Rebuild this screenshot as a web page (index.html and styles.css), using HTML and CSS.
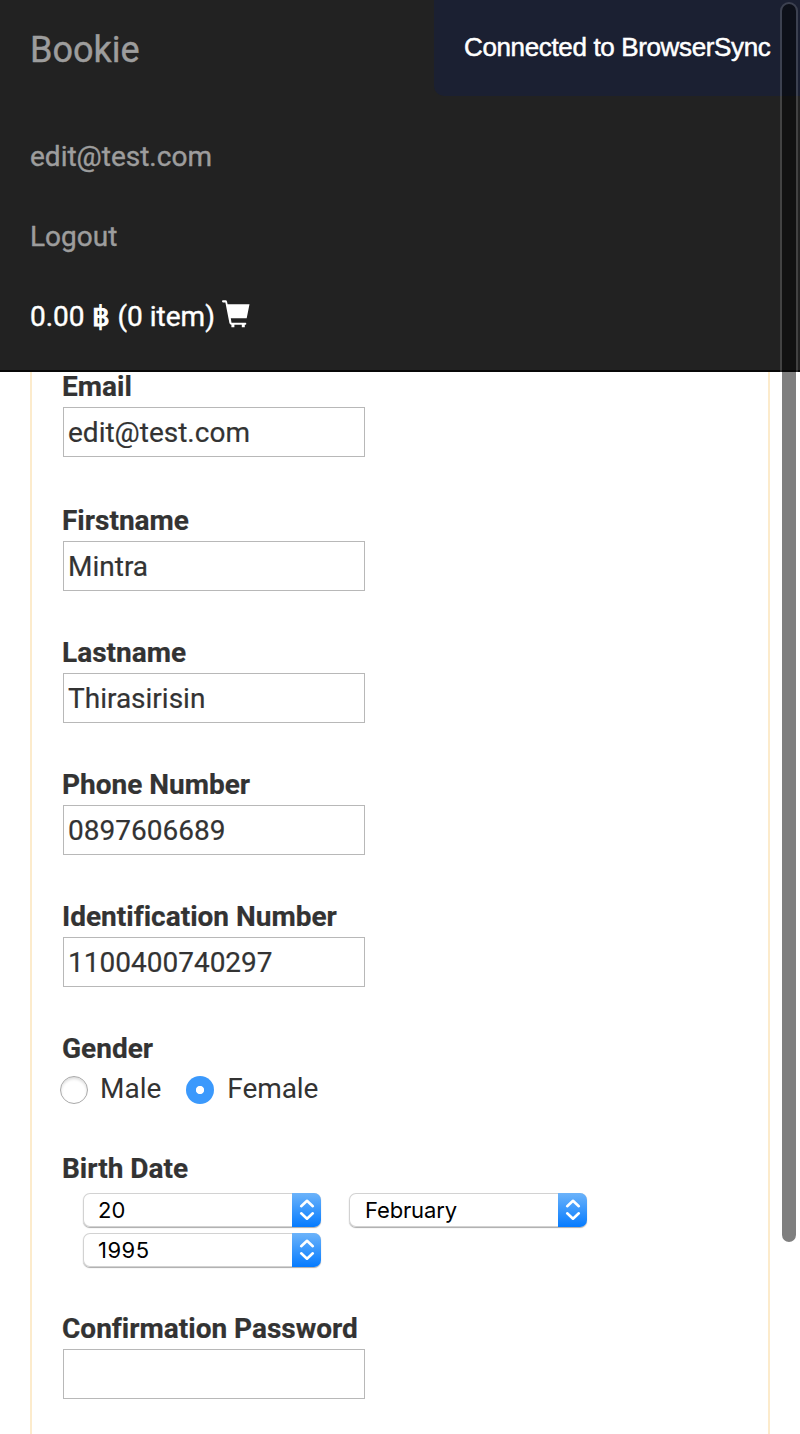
FILE: index.html
```html
<!DOCTYPE html>
<html lang="en">
<head>
<meta charset="utf-8">
<title>Bookie</title>
<link rel="stylesheet" href="styles.css">
</head>
<body>
<nav class="navbar">
  <a class="brand">Bookie</a>
  <ul class="nav">
    <li><a>edit@test.com</a></li>
    <li><a>Logout</a></li>
    <li class="cart"><span>0.00 <span class="baht">฿</span> (0 item)</span>
      <svg class="cart-icon" width="28" height="28" viewBox="0 0 28 28"><path d="M1 .2H3.6Q4.7 .2 5 1.5L5.6 4.3H27.5L24.7 18.2H8.8L9.5 22.7H23.5Q24.3 22.9 24.3 23.7T23.5 24.7H22.8V27.2H19.8V24.7H12.4V27.2H9.4V24.7H9Q7.7 24.5 7.4 23.1L3.4 2.5H1Q0 2.3 0 1.3T1 .2Z"/></svg>
    </li>
  </ul>
</nav>
<main class="panel">
  <form class="form">
    <div class="field first"><label for="email">Email</label><input id="email" value="edit@test.com"></div>
    <div class="field"><label for="firstname">Firstname</label><input id="firstname" value="Mintra"></div>
    <div class="field"><label for="lastname">Lastname</label><input id="lastname" value="Thirasirisin"></div>
    <div class="field"><label for="phone">Phone Number</label><input id="phone" value="0897606689"></div>
    <div class="field"><label for="ident">Identification Number</label><input id="ident" value="1100400740297"></div>
    <div class="field gender">
      <label>Gender</label>
      <div class="radios">
        <span class="radio"></span><span class="male">Male</span>
        <span class="radio checked"></span><span class="female">Female</span>
      </div>
    </div>
    <div class="field birth">
      <label>Birth Date</label>
      <div class="dates">
        <div class="select"><span>20</span><i class="arrows"><svg width="16" height="22" viewBox="0 0 16 22"><path d="M2.2 7.2 8 1.8l5.8 5.4M2.2 14.3 8 19.7l5.8-5.4"/></svg></i></div>
        <div class="select month"><span>February</span><i class="arrows"><svg width="16" height="22" viewBox="0 0 16 22"><path d="M2.2 7.2 8 1.8l5.8 5.4M2.2 14.3 8 19.7l5.8-5.4"/></svg></i></div>
        <div class="select year"><span>1995</span><i class="arrows"><svg width="16" height="22" viewBox="0 0 16 22"><path d="M2.2 7.2 8 1.8l5.8 5.4M2.2 14.3 8 19.7l5.8-5.4"/></svg></i></div>
      </div>
    </div>
    <div class="field"><label for="confirm">Confirmation Password</label><input id="confirm" type="password"></div>
  </form>
</main>
<div class="notify">Connected to BrowserSync</div>
<div class="scrollbar"></div>
</body>
</html>
```
FILE: styles.css
```css
* { box-sizing: border-box; }
body {
  margin: 0;
  height: 1434px;
  overflow: hidden;
  display: flex;
  flex-direction: column;
  position: relative;
  background: #fff;
  color: #333;
  font: 28px/40px Roboto, sans-serif;
  font-variant-ligatures: none;
}
.navbar {
  flex: none;
  height: 372px;
  padding: 30px 30px 0;
  background: #222;
  border-bottom: 2px solid #080808;
  color: #9d9d9d;
  -webkit-text-stroke: .4px currentColor;
  z-index: 1;
}
.brand { display: block; font-size: 36px; line-height: 40px; }
.nav { list-style: none; margin: 67px 0 0; padding: 0; display: grid; gap: 40px; }
.nav li { height: 40px; }
.cart { display: flex; gap: 7px; color: #fff; }
.baht { margin-right: 1px; -webkit-text-stroke: 1px currentColor; }
.cart-icon { fill: currentColor; margin-top: 3px; }
.panel {
  flex: 1;
  min-height: 0;
  margin: 0 30px;
  padding: 0 31px;
  border: solid #fcebcc;
  border-width: 0 2px;
}
.form { display: flex; flex-direction: column; gap: 42px; margin-top: -5px; }
.first { margin-bottom: 2px; }
.field label { display: block; height: 40px; margin-left: -1px; font-weight: 700; -webkit-text-stroke: .2px currentColor; }
.field input {
  display: block;
  width: 302px;
  height: 50px;
  padding: 0 4px;
  border: 1px solid #b8b8b8;
  border-radius: 0;
  background: #fff;
  color: #333;
  font: inherit;
  -webkit-text-stroke: .2px currentColor;
}
.gender { margin-bottom: -2px; }
.radios { display: flex; align-items: center; height: 40px; margin-left: -3px; }
.radio {
  width: 28px;
  height: 28px;
  margin-top: 2px;
  border-radius: 50%;
  border: 1px solid #aaa;
  box-shadow: inset 0 2px 3px #ddd;
}
.checked { border: 0; background: radial-gradient(circle, #fff 3.7px, #3b99fc 4.5px); box-shadow: none; }
.male { margin: 0 25px 0 12px; }
.female { margin-left: 13px; letter-spacing: -.1px; }
.dates {
  display: grid;
  grid-template-columns: 238px 238px;
  gap: 6px 28px;
  padding: 4px 0 0 20px;
}
.select {
  display: flex;
  justify-content: space-between;
  height: 34px;
  border-radius: 7px;
  box-shadow: inset 0 0 0 1px #d2d2d2, 0 1px 1px #aaa;
  color: #000;
  font: 22px/34px Inter, sans-serif;
  overflow: hidden;
}
.select span { padding-left: 15px; }
.month span { padding-left: 16px; letter-spacing: -.15px; }
.year span { letter-spacing: .5px; }
.arrows {
  display: grid;
  place-items: center;
  width: 29px;
  background: linear-gradient(#6cb3fa, #057bff);
}
.arrows svg { fill: none; stroke: #fff; stroke-width: 2.6; stroke-linecap: round; stroke-linejoin: round; }
.notify {
  position: absolute;
  top: 0;
  right: 0;
  z-index: 2;
  width: 366px;
  height: 96px;
  padding-left: 30px;
  border-bottom-left-radius: 10px;
  background: #1b2032;
  color: #fff;
  font: 26px/95px "Liberation Sans", sans-serif;
  letter-spacing: -.36px;
  -webkit-text-stroke: .5px currentColor;
  white-space: nowrap;
}
.scrollbar {
  position: absolute;
  z-index: 3;
  top: 2px;
  left: 780px;
  width: 18px;
  height: 1242px;
  border: 2px solid rgba(255,255,255,.15);
  border-radius: 9px;
  background: rgba(0,0,0,.5);
  background-clip: padding-box;
}
```
